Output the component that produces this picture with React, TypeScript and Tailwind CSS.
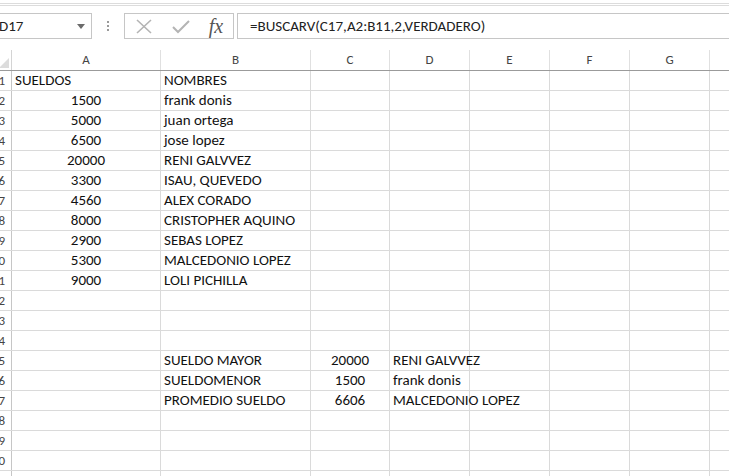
import React from "react";

const cols = [
  { k: "A", w: "w-[149px]" },
  { k: "B", w: "w-[150px]" },
  { k: "C", w: "w-[79px]" },
  { k: "D", w: "w-[80px]" },
  { k: "E", w: "w-[80px]" },
  { k: "F", w: "w-[80px]" },
  { k: "G", w: "w-[80px]" },
  { k: "H", w: "w-[80px]" },
];

type Cell = { v?: string; c?: boolean };
const data: Record<number, Cell[]> = {
  1: [{ v: "SUELDOS" }, { v: "NOMBRES" }],
  2: [{ v: "1500", c: true }, { v: "frank donis" }],
  3: [{ v: "5000", c: true }, { v: "juan ortega" }],
  4: [{ v: "6500", c: true }, { v: "jose lopez" }],
  5: [{ v: "20000", c: true }, { v: "RENI GALVVEZ" }],
  6: [{ v: "3300", c: true }, { v: "ISAU, QUEVEDO" }],
  7: [{ v: "4560", c: true }, { v: "ALEX CORADO" }],
  8: [{ v: "8000", c: true }, { v: "CRISTOPHER AQUINO" }],
  9: [{ v: "2900", c: true }, { v: "SEBAS LOPEZ" }],
  10: [{ v: "5300", c: true }, { v: "MALCEDONIO LOPEZ" }],
  11: [{ v: "9000", c: true }, { v: "LOLI PICHILLA" }],
  15: [{}, { v: "SUELDO MAYOR" }, { v: "20000", c: true }, { v: "RENI GALVVEZ" }],
  16: [{}, { v: "SUELDOMENOR" }, { v: "1500", c: true }, { v: "frank donis" }],
  17: [{}, { v: "PROMEDIO SUELDO" }, { v: "6606", c: true }, { v: "MALCEDONIO LOPEZ" }],
};

export default function App() {
  const rows = Array.from({ length: 21 }, (_, i) => i + 1);
  return (
    <div className="w-[729px] h-[476px] overflow-hidden bg-white text-black" style={{ fontFamily: "Calibri, Carlito, 'Open Sans', sans-serif" }}>
      <div className="-ml-[13px] w-[820px]">
        {/* top ribbon edge */}
        <div className="mt-[3px] h-[3px] border-y border-[#dcdcdc]" />
        {/* formula bar row */}
        <div className="mt-[7px] h-[26px] flex items-stretch">
          <div className="w-[105px] shrink-0 border border-[#c6c6c6] flex items-center justify-between pl-[11px] pr-[6px]">
            <span className="text-[15px] text-[#222]">D17</span>
            <svg width="8" height="5" viewBox="0 0 8 5"><path d="M0 0 L8 0 L4 5 Z" fill="#6b6b6b" /></svg>
          </div>
          <div className="w-[32px] shrink-0 flex items-center justify-center">
            <div className="flex flex-col gap-[2px]">
              <span className="w-[2px] h-[2px] bg-[#9a9a9a]" />
              <span className="w-[2px] h-[2px] bg-[#9a9a9a]" />
              <span className="w-[2px] h-[2px] bg-[#9a9a9a]" />
            </div>
          </div>
          <div className="w-[110px] shrink-0 border border-[#c6c6c6] flex items-center">
            <div className="w-[38px] flex justify-center">
              <svg width="16" height="15" viewBox="0 0 16 15"><path d="M1 1 L15 14 M15 1 L1 14" stroke="#b4b4b4" strokeWidth="1.6" fill="none" /></svg>
            </div>
            <div className="w-[36px] flex justify-center">
              <svg width="18" height="15" viewBox="0 0 18 15"><path d="M1 8 L6 13 L17 2" stroke="#b4b4b4" strokeWidth="2" fill="none" /></svg>
            </div>
            <div className="w-[34px] flex justify-center">
              <span className="text-[20px] italic leading-none text-[#555]" style={{ fontFamily: "'Liberation Serif', serif" }}>fx</span>
            </div>
          </div>
          <div className="w-[3px] shrink-0" />
          <div className="flex-1 border border-[#c6c6c6] flex items-center pl-[12px]">
            <span className="text-[15px] text-[#222]">=BUSCARV(C17,A2:B11,2,VERDADERO)</span>
          </div>
        </div>
        {/* column headers */}
        <div className="mt-[11px] flex h-[21px] border-b border-[#9b9b9b]">
          <div className="w-[25px] shrink-0 border-r border-[#d4d4d4] relative">
            <svg className="absolute right-[2px] bottom-[2px]" width="10" height="10" viewBox="0 0 10 10"><path d="M10 0 L10 10 L0 10 Z" fill="#dcdcdc" /></svg>
          </div>
          {cols.map((c) => (
            <div key={c.k} className={`${c.w} shrink-0 border-r border-[#e0e0e0] flex items-center justify-center text-[13px] text-[#444]`}>
              {c.k}
            </div>
          ))}
        </div>
        {rows.map((r) => (
          <div key={r} className="flex h-[20px] border-b border-[#dadada]">
            <div className="w-[25px] shrink-0 border-r border-[#c6c6c6] flex items-center justify-end pr-[6px] text-[13px] text-[#444]">{r}</div>
            {cols.map((c, ci) => {
              const cell = data[r]?.[ci];
              return (
                <div key={c.k} className={`${c.w} shrink-0 border-r border-[#dadada] flex items-center overflow-visible whitespace-nowrap text-[15px] text-[#111] ${cell?.c ? "justify-center" : "pl-[3px]"}`}>
                  {cell?.v}
                </div>
              );
            })}
          </div>
        ))}
      </div>
    </div>
  );
}
